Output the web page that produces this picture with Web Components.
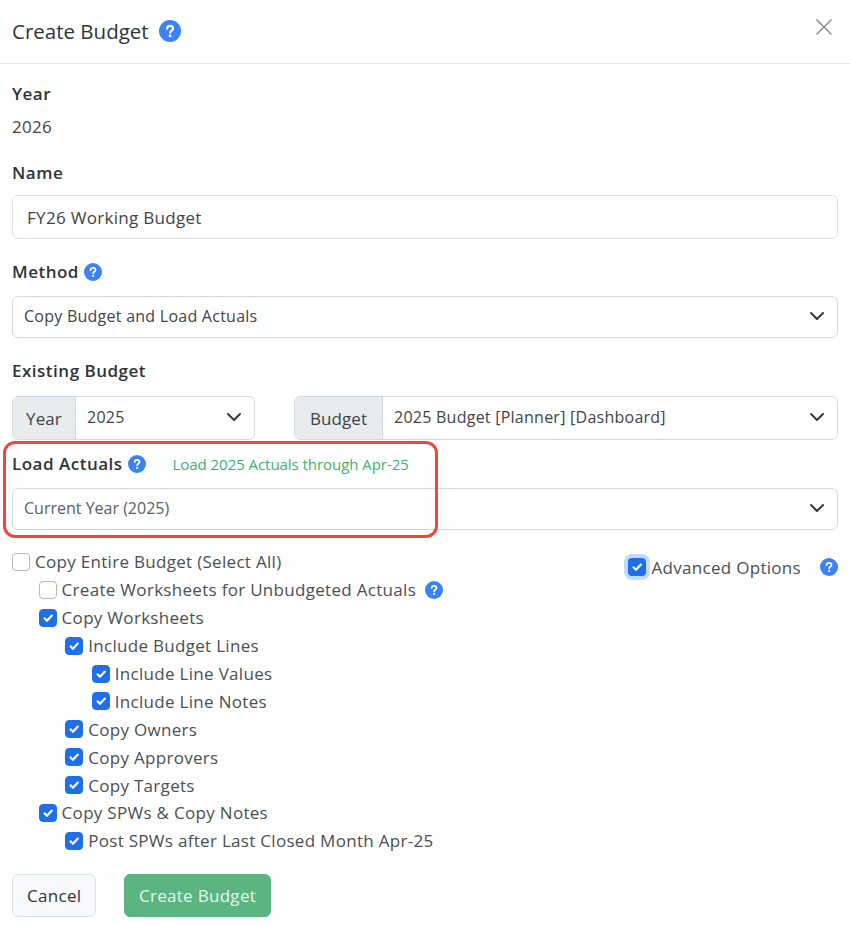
<!DOCTYPE html>
<html lang="en">
<head>
<meta charset="utf-8">
<title>Create Budget</title>
<style>
    html, body { margin: 0; background: #fff; }
    body { font-family: "Open Sans", "Noto Sans", sans-serif; font-size: 17px; letter-spacing: .3px; color: #3f4449; }
</style>
</head>
<body>
<budget-modal>
    <modal-header slot="header">Create Budget</modal-header>

    <field-block label="Year" gap="9"><span>2026</span></field-block>
    <field-block label="Name" top="22" gap="10"><text-box>FY26 Working Budget</text-box></field-block>
    <field-block label="Method" help top="21" gap="12"><select-box>Copy Budget and Load Actuals</select-box></field-block>
    <field-block label="Existing Budget" top="21" gap="13">
        <group-row>
            <select-box prefix="Year" prefix-width="63" style="width:243px">2025</select-box>
            <select-box prefix="Budget" prefix-width="88" style="flex:1">2025 Budget [Planner] [Dashboard]</select-box>
        </group-row>
    </field-block>
    <highlight-box>
        <field-block label="Load Actuals" help hint="Load 2025 Actuals through Apr-25" top="12" gap="12"><select-box muted>Current Year (2025)</select-box></field-block>
    </highlight-box>

    <options-panel>
        <check-row>Copy Entire Budget (Select All)</check-row>
        <check-row level="1" help>Create Worksheets for Unbudgeted Actuals</check-row>
        <check-row level="1" checked>Copy Worksheets</check-row>
        <check-row level="2" checked>Include Budget Lines</check-row>
        <check-row level="3" checked>Include Line Values</check-row>
        <check-row level="3" checked>Include Line Notes</check-row>
        <check-row level="2" checked>Copy Owners</check-row>
        <check-row level="2" checked>Copy Approvers</check-row>
        <check-row level="2" checked>Copy Targets</check-row>
        <check-row level="1" checked>Copy SPWs &amp; Copy Notes</check-row>
        <check-row level="2" checked>Post SPWs after Last Closed Month Apr-25</check-row>
        <advanced-toggle slot="side">Advanced Options</advanced-toggle>
    </options-panel>

    <button-bar>
        <app-button>Cancel</app-button>
        <app-button primary>Create Budget</app-button>
    </button-bar>
</budget-modal>

<script>
const helpIcon = (size) => `
    <svg width="${size}" height="${size}" viewBox="0 0 18 18" aria-hidden="true" style="display:block;flex:none">
        <circle cx="9" cy="9" r="9" fill="#3b82f6"/>
        <path d="M6.6 7.1c0-1.4 1-2.3 2.5-2.3s2.4.9 2.4 2.1c0 1.9-2.3 1.8-2.3 3.5" fill="none" stroke="#fff" stroke-width="1.7" stroke-linecap="round"/>
        <circle cx="9.1" cy="13" r="1.1" fill="#fff"/>
    </svg>`;

const chevron = `
    <svg width="16" height="16" viewBox="0 0 16 16" aria-hidden="true" style="display:block;flex:none">
        <path d="M2 5l6 6 6-6" fill="none" stroke="#343a40" stroke-width="2" stroke-linecap="round" stroke-linejoin="round"/>
    </svg>`;

const checkMark = `
    <svg width="14" height="14" viewBox="0 0 20 20" aria-hidden="true" style="display:block">
        <path d="M5 10.5l3.5 3.5 7-7.5" fill="none" stroke="#fff" stroke-width="3" stroke-linecap="round" stroke-linejoin="round"/>
    </svg>`;

class BudgetModal extends HTMLElement {
    constructor(){
        super();
        this.attachShadow({mode:'open'});
    }
    connectedCallback(){
        this.shadowRoot.innerHTML = `
            <style>
                :host{ display:block; width:850px; height:925px; overflow:hidden; background:#fff; }
                .body{ padding:18px 12px 0; }
            </style>
            <slot name="header"></slot>
            <div class="body"><slot></slot></div>
        `;
    }
}

class ModalHeader extends HTMLElement {
    constructor(){
        super();
        this.attachShadow({mode:'open'});
    }
    connectedCallback(){
        this.shadowRoot.innerHTML = `
            <style>
                :host{ display:flex; align-items:center; box-sizing:content-box; height:61px; padding:0 17px 2px 12px; border-bottom:1px solid #e4e7ea; color:#2f3439; }
                .title{ font-size:20.5px; font-weight:500; line-height:24px; letter-spacing:0; }
                .help{ margin-left:10px; }
                .close{ margin-left:auto; margin-top:-7px; }
            </style>
            <span class="title"><slot></slot></span>
            <span class="help">${helpIcon(22)}</span>
            <svg class="close" width="18" height="18" viewBox="0 0 18 18" aria-hidden="true">
                <path d="M1.5 1.5l15 15M16.5 1.5l-15 15" stroke="#8a8f94" stroke-width="1.5" fill="none"/>
            </svg>
        `;
    }
}

class FieldBlock extends HTMLElement {
    constructor(){
        super();
        this.attachShadow({mode:'open'});
    }
    connectedCallback(){
        const help = this.hasAttribute('help') ? `<span class="help">${helpIcon(18)}</span>` : '';
        const hint = this.getAttribute('hint');
        this.shadowRoot.innerHTML = `
            <style>
                :host{ display:block; margin-top:${this.getAttribute('top') || 0}px; }
                .label{ display:flex; align-items:center; height:24px; margin-bottom:${this.getAttribute('gap') || 0}px; font-weight:600; font-size:17px; letter-spacing:.5px; color:#2f3439; }
                .text{ margin-top:-2px; }
                .help{ margin-left:5px; }
                .hint{ margin-left:27px; font-weight:400; font-size:15px; letter-spacing:-.05px; color:#3cb371; }
                .content{ line-height:24px; }
            </style>
            <div class="label"><span class="text">${this.getAttribute('label')}</span>${help}${hint ? `<span class="hint">${hint}</span>` : ''}</div>
            <div class="content"><slot></slot></div>
        `;
    }
}

class TextBox extends HTMLElement {
    constructor(){
        super();
        this.attachShadow({mode:'open'});
    }
    connectedCallback(){
        this.shadowRoot.innerHTML = `
            <style>
                :host{ display:flex; align-items:center; box-sizing:border-box; height:44px; padding:2px 14px 0; border:1px solid #dee2e6; border-radius:6px; background:#fff; color:#3f4449; }
            </style>
            <slot></slot>
        `;
    }
}

class SelectBox extends HTMLElement {
    constructor(){
        super();
        this.attachShadow({mode:'open'});
    }
    connectedCallback(){
        const prefix = this.getAttribute('prefix');
        const muted = this.hasAttribute('muted');
        this.shadowRoot.innerHTML = `
            <style>
                :host{ display:flex; box-sizing:border-box; height:${prefix ? 44 : 42}px; border:1px solid #d5d9de; border-radius:6px; background:#fff; font-size:16px; letter-spacing:${muted ? 0 : .25}px; color:${muted ? '#5a6067' : '#3f4449'}; overflow:hidden; }
                .prefix{ display:flex; align-items:center; justify-content:center; box-sizing:border-box; width:${this.getAttribute('prefix-width')}px; padding-top:2px; background:#e9ecef; border-right:1px solid #d5d9de; font-size:17px; letter-spacing:.1px; }
                .value{ flex:1; display:flex; align-items:center; padding:0 12px 2px 11px; min-width:0; white-space:nowrap; }
                .chevron{ margin-left:auto; padding-left:8px; }
            </style>
            ${prefix ? `<span class="prefix">${prefix}</span>` : ''}
            <div class="value"><slot></slot><span class="chevron">${chevron}</span></div>
        `;
    }
}

class GroupRow extends HTMLElement {
    constructor(){
        super();
        this.attachShadow({mode:'open'});
    }
    connectedCallback(){
        this.shadowRoot.innerHTML = `
            <style>
                :host{ display:flex; gap:39px; }
            </style>
            <slot></slot>
        `;
    }
}

// red annotation drawn over the form, it does not take any room in the flow
class HighlightBox extends HTMLElement {
    constructor(){
        super();
        this.attachShadow({mode:'open'});
    }
    connectedCallback(){
        this.shadowRoot.innerHTML = `
            <style>
                :host{ display:block; position:relative; }
                .ring{ position:absolute; left:-9px; top:-11px; width:429px; height:91px; border:3px solid #e44d3a; border-radius:12px; pointer-events:none; }
            </style>
            <slot></slot>
            <div class="ring"></div>
        `;
    }
}

class OptionsPanel extends HTMLElement {
    constructor(){
        super();
        this.attachShadow({mode:'open'});
    }
    connectedCallback(){
        this.shadowRoot.innerHTML = `
            <style>
                :host{ display:flex; justify-content:space-between; margin-top:18px; }
                .side{ margin-top:7px; }
            </style>
            <div class="rows"><slot></slot></div>
            <div class="side"><slot name="side"></slot></div>
        `;
    }
}

class CheckRow extends HTMLElement {
    constructor(){
        super();
        this.attachShadow({mode:'open'});
    }
    connectedCallback(){
        const level = Number(this.getAttribute('level') || 0);
        const checked = this.hasAttribute('checked');
        this.shadowRoot.innerHTML = `
            <style>
                :host{ display:flex; align-items:center; height:27.9px; padding-left:${level * 26.6}px; white-space:nowrap; color:#4a4f55; }
                .box{ display:flex; align-items:center; justify-content:center; box-sizing:border-box; width:18px; height:18px; margin-right:5px; border-radius:4px; border:1px solid ${checked ? '#1f6feb' : '#b4b9bf'}; background:${checked ? '#1f6feb' : '#fff'}; }
                .help{ margin-left:9px; }
            </style>
            <span class="box">${checked ? checkMark : ''}</span>
            <slot></slot>
            ${this.hasAttribute('help') ? `<span class="help">${helpIcon(18)}</span>` : ''}
        `;
    }
}

class AdvancedToggle extends HTMLElement {
    constructor(){
        super();
        this.attachShadow({mode:'open'});
    }
    connectedCallback(){
        this.shadowRoot.innerHTML = `
            <style>
                :host{ display:flex; align-items:center; height:24px; white-space:nowrap; color:#4a4f55; }
                .box{ display:flex; align-items:center; justify-content:center; box-sizing:border-box; width:18px; height:18px; margin-right:5px; border-radius:4px; background:#1f6feb; box-shadow:0 0 0 4px #c3d9fd; }
                .help{ margin-left:19px; }
            </style>
            <span class="box">${checkMark}</span>
            <slot></slot>
            <span class="help">${helpIcon(18)}</span>
        `;
    }
}

class ButtonBar extends HTMLElement {
    constructor(){
        super();
        this.attachShadow({mode:'open'});
    }
    connectedCallback(){
        this.shadowRoot.innerHTML = `
            <style>
                :host{ display:flex; gap:28px; margin-top:19px; }
            </style>
            <slot></slot>
        `;
    }
}

class AppButton extends HTMLElement {
    constructor(){
        super();
        this.attachShadow({mode:'open'});
    }
    connectedCallback(){
        const primary = this.hasAttribute('primary');
        this.shadowRoot.innerHTML = `
            <style>
                :host{ display:flex; align-items:center; box-sizing:border-box; height:43px; padding:0 ${primary ? 13.5 : 14}px; border-radius:6px;
                    border:1px solid ${primary ? '#5ab581' : '#dee2e6'};
                    background:${primary ? '#5ab581' : '#f8f9fa'};
                    color:${primary ? '#e9f6ef' : '#2f3439'}; }
            </style>
            <slot></slot>
        `;
    }
}

customElements.define('budget-modal', BudgetModal);
customElements.define('modal-header', ModalHeader);
customElements.define('field-block', FieldBlock);
customElements.define('text-box', TextBox);
customElements.define('select-box', SelectBox);
customElements.define('group-row', GroupRow);
customElements.define('highlight-box', HighlightBox);
customElements.define('options-panel', OptionsPanel);
customElements.define('check-row', CheckRow);
customElements.define('advanced-toggle', AdvancedToggle);
customElements.define('button-bar', ButtonBar);
customElements.define('app-button', AppButton);
</script>
</body>
</html>
